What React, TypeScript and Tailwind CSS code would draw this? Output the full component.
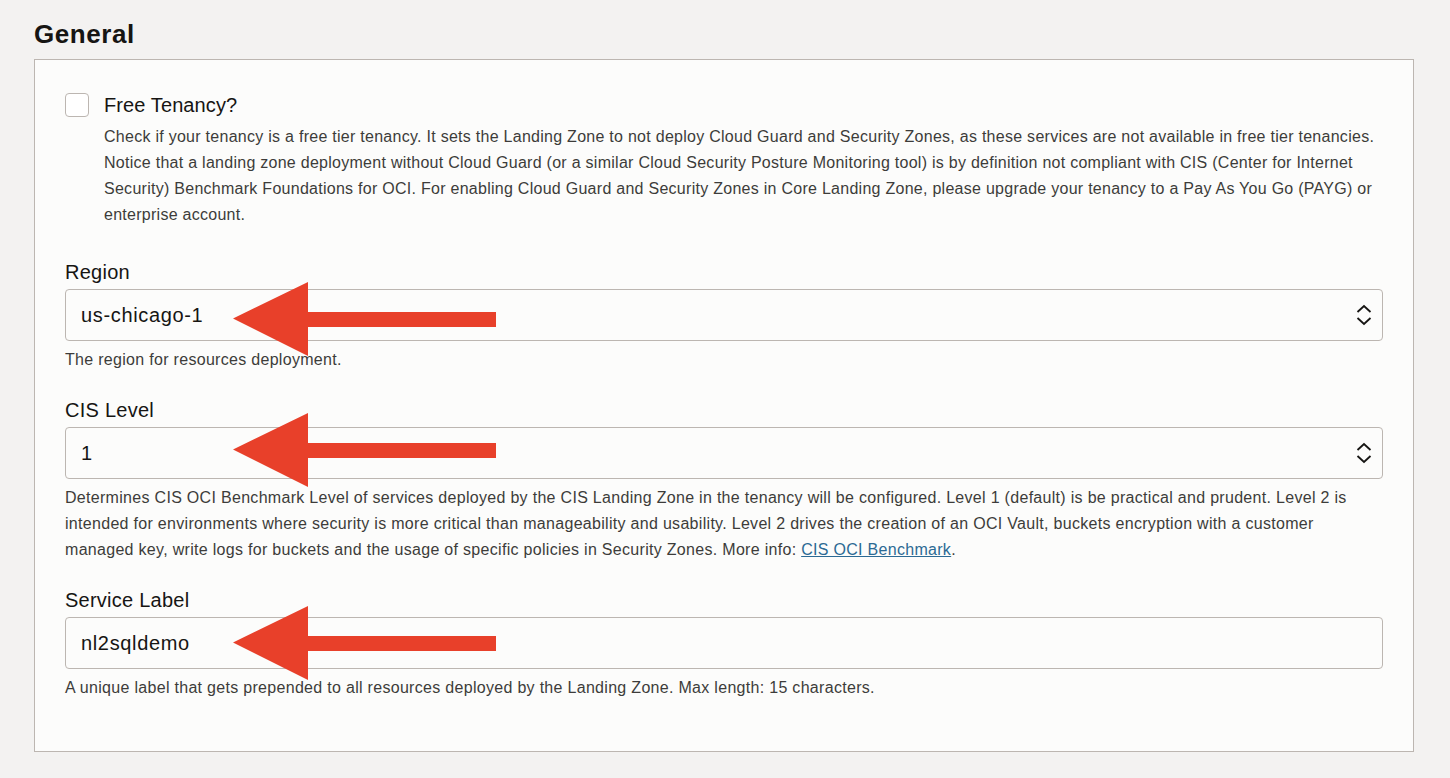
import React from 'react';

const font = { fontFamily: '"Liberation Sans", Arial, sans-serif' };

// Red annotation arrow laid over the form fields
function Arrow({ top }: { top: number }) {
  return (
    <svg
      className="absolute pointer-events-none"
      style={{ left: 168, top }}
      width="264"
      height="75"
      viewBox="0 0 264 75"
    >
      <polygon points="0,36.5 75,0 75,30 263,30 263,45 75,45 75,74" fill="#e8402a" />
    </svg>
  );
}

function UpDown() {
  return (
    <svg width="16" height="24" viewBox="0 0 16 24" className="shrink-0">
      <path d="M1.5 9 L8 3 L14.5 9" fill="none" stroke="#161513" strokeWidth="1.8" />
      <path d="M1.5 15 L8 21 L14.5 15" fill="none" stroke="#161513" strokeWidth="1.8" />
    </svg>
  );
}

function Field({
  label,
  value,
  select,
  arrowTop,
  children,
  className,
}: {
  label: string;
  value: string;
  select?: boolean;
  arrowTop: number;
  children: React.ReactNode;
  className?: string;
}) {
  return (
    <div className={className}>
      <div className="text-[20px] leading-[26px] tracking-[0.25px] text-[#161513]">{label}</div>
      <div className="relative mt-[4px]">
        <div className="h-[52px] rounded-[4px] border border-[#bcb6b1] bg-[#fcfcfb] pl-[15px] pr-[10px] flex items-center justify-between">
          <span className="text-[20px] tracking-[0.65px] text-[#161513]">{value}</span>
          {select && <UpDown />}
        </div>
        <Arrow top={arrowTop} />
      </div>
      <div className="mt-[6px] text-[16px] leading-[26px] tracking-[0.3px] text-[#3d3c3a]">{children}</div>
    </div>
  );
}

export default function App() {
  return (
    <div className="min-h-screen bg-[#f3f2f1] pl-[34px] pt-[18px] pb-[26px]" style={font}>
      <h2 className="text-[26px] leading-[32px] font-bold tracking-[0.55px] text-[#161513]">General</h2>
      <div className="mt-[9px] w-[1380px] border border-[#bcb6b1] bg-[#fcfcfb] px-[30px] pt-[32px] pb-[50px]">
        <div className="flex items-start gap-[15px]">
          <div className="w-[24px] h-[24px] rounded-[4px] border border-[#bcb6b1] bg-white shrink-0 mt-[1px]" />
          <div>
            <div className="text-[20px] leading-[26px] tracking-[0.1px] text-[#161513]">Free Tenancy?</div>
            <p className="mt-[6px] text-[16px] leading-[26px] tracking-[0.27px] text-[#3d3c3a]">
              Check if your tenancy is a free tier tenancy. It sets the Landing Zone to not deploy Cloud Guard and
              Security Zones, as these services are not available in free tier tenancies. Notice that a landing zone
              deployment without Cloud Guard (or a similar Cloud Security Posture Monitoring tool) is by definition not
              compliant with CIS (Center for Internet Security) Benchmark Foundations for OCI. For enabling Cloud Guard
              and Security Zones in Core Landing Zone, please upgrade your tenancy to a Pay As You Go (PAYG) or
              enterprise account.
            </p>
          </div>
        </div>

        <Field className="mt-[31px]" label="Region" value="us-chicago-1" select arrowTop={-7}>
          The region for resources deployment.
        </Field>

        <Field className="mt-[24px]" label="CIS Level" value="1" select arrowTop={-14}>
          Determines CIS OCI Benchmark Level of services deployed by the CIS Landing Zone in the tenancy will be
          configured. Level 1 (default) is be practical and prudent. Level 2 is intended for environments where
          security is more critical than manageability and usability. Level 2 drives the creation of an OCI Vault,
          buckets encryption with a customer managed key, write logs for buckets and the usage of specific policies in
          Security Zones. More info:{' '}
          <a href="#" className="text-[#2c6a94] underline">
            CIS OCI Benchmark
          </a>
          .
        </Field>

        <Field className="mt-[24px]" label="Service Label" value="nl2sqldemo" arrowTop={-11}>
          A unique label that gets prepended to all resources deployed by the Landing Zone. Max length: 15 characters.
        </Field>
      </div>
    </div>
  );
}
